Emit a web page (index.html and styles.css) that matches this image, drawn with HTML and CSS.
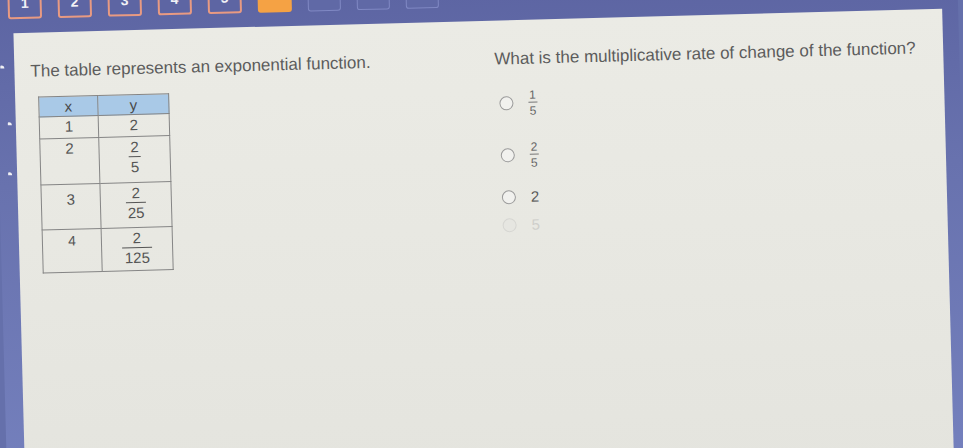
FILE: index.html
```html
<!DOCTYPE html>
<html lang="en">
<head>
<meta charset="utf-8">
<title>Exponential function question</title>
<link rel="stylesheet" href="styles.css">
</head>
<body>
<div class="screen">
  <nav class="nav">
    <span class="qbtn done">1</span>
    <span class="qbtn done">2</span>
    <span class="qbtn done">3</span>
    <span class="qbtn done">4</span>
    <span class="qbtn done">5</span>
    <span class="qbtn current">6</span>
    <span class="qbtn empty">7</span>
    <span class="qbtn empty">8</span>
    <span class="qbtn empty">9</span>
  </nav>
  <div class="main">
    <div class="rail">
      <span class="mark m1"></span>
      <span class="mark m2"></span>
      <span class="mark m3"></span>
    </div>
    <section class="card">
      <div class="cols">
        <div class="col-left">
          <p class="prompt">The table represents an exponential function.</p>
          <table class="data">
            <thead>
              <tr class="r-head"><th>x</th><th>y</th></tr>
            </thead>
            <tbody>
              <tr class="r1"><td>1</td><td>2</td></tr>
              <tr class="r2"><td>2</td><td><span class="frac"><span class="num">2</span><span class="den">5</span></span></td></tr>
              <tr class="r3"><td>3</td><td><span class="frac"><span class="num">2</span><span class="den">25</span></span></td></tr>
              <tr class="r4"><td>4</td><td><span class="frac"><span class="num">2</span><span class="den">125</span></span></td></tr>
            </tbody>
          </table>
        </div>
        <div class="col-right">
          <p class="prompt">What is the multiplicative rate of change of the function?</p>
          <ul class="options">
            <li class="opt o1"><span class="radio"></span><span class="frac small"><span class="num">1</span><span class="den">5</span></span></li>
            <li class="opt o2"><span class="radio"></span><span class="frac small"><span class="num">2</span><span class="den">5</span></span></li>
            <li class="opt o3"><span class="radio"></span><span class="val">2</span></li>
            <li class="opt o4 faded"><span class="radio"></span><span class="val">5</span></li>
          </ul>
        </div>
      </div>
    </section>
  </div>
</div>
</body>
</html>
```
FILE: styles.css
```css
html, body {
  margin: 0;
  padding: 0;
  width: 963px;
  height: 448px;
  overflow: hidden;
  background: #6570ab;
  font-family: "Liberation Sans", Arial, sans-serif;
}

.screen {
  width: 963px;
  height: 490px;
  transform-origin: 481px 224px;
  transform: rotate(-1.5deg);
  background: linear-gradient(180deg, #5c64a2 0%, #6872ae 40%, #7480bd 100%);
}

.nav {
  display: flex;
  gap: 16px;
  padding-left: 13px;
  margin-top: -23px;
  height: 30px;
}

.qbtn {
  box-sizing: border-box;
  width: 34px;
  height: 30px;
  border-radius: 3px;
  display: flex;
  align-items: flex-end;
  justify-content: center;
  padding-bottom: 6px;
  color: #f2f2f6;
  font-weight: bold;
  font-size: 14px;
}

.qbtn.done {
  border: 2px solid #e89a82;
  background: #5d65a3;
}

.qbtn.current {
  background: #f5a244;
  color: #f5a244;
}

.qbtn.empty {
  width: 33px;
  border: 1.5px solid #8089c4;
  background: #6069a6;
  color: transparent;
}

.main {
  display: flex;
  margin-top: 14px;
}

.rail {
  width: 18px;
  flex: none;
  display: flex;
  flex-direction: column;
}

.mark {
  display: block;
  width: 4px;
  height: 3px;
  background: #f0f0f4;
  border-radius: 1px 3px 0 0;
}

.m1 { margin: 32px 0 0 4px; }
.m2 { margin: 54px 0 0 10px; }
.m3 { margin: 47px 0 0 9px; }

.card {
  width: 929px;
  height: 460px;
  box-sizing: border-box;
  padding: 29px 0 0 16px;
  background: linear-gradient(180deg, #ebebe5 0%, #e7e7e1 60%, #e4e4de 100%);
}

.cols {
  display: flex;
}

.col-left {
  width: 464px;
  flex: none;
}

.col-right {
  flex: 1;
}

.prompt {
  margin: 0;
  font-size: 17px;
  line-height: 20px;
  color: #5c5c5c;
  white-space: nowrap;
}

.data {
  margin: 15px 0 0 7px;
  border-collapse: collapse;
  color: #555;
  font-size: 15px;
}

.data th,
.data td {
  border: 1px solid #858585;
  padding: 2px 0 0;
  text-align: center;
  vertical-align: top;
  line-height: 16px;
}

.data th {
  background: #a9c9e7;
  font-weight: normal;
  color: #4a4a4a;
}

.data th:first-child,
.data td:first-child { width: 58px; }

.data th:last-child,
.data td:last-child { width: 70px; }

.r-head { height: 20px; }
.r1 { height: 22px; }
.r2 { height: 46px; }
.r3 { height: 45px; }
.r4 { height: 43px; }

.r3 td:first-child { padding-top: 7px; }
.r4 td:first-child { padding-top: 3px; font-size: 14px; }

.frac {
  display: inline-flex;
  flex-direction: column;
  align-items: center;
  line-height: 1;
  vertical-align: top;
}

.frac .num {
  padding: 0 2px 2px;
}

.frac .den {
  border-top: 1.5px solid #555;
  padding: 2px 2px 0;
}

.options {
  list-style: none;
  margin: 8px 0 0;
  padding: 0;
}

.opt {
  display: flex;
  align-items: center;
  color: #5a5a5a;
}

.o1 { height: 52px; }
.o2 { height: 52px; }
.o3 { height: 32px; }
.o4 { height: 24px; }

.radio {
  box-sizing: border-box;
  width: 14px;
  height: 14px;
  border-radius: 50%;
  border: 1.5px solid #9b9b9b;
  background: #f1f1ee;
  margin: 0 15px 0 4px;
  flex: none;
}

.frac.small {
  font-size: 12px;
  color: #666;
}

.frac.small .num { padding: 0 1px 1px; }
.frac.small .den { padding: 2px 1px 0; border-top: 1px solid #777; }

.val {
  font-size: 15px;
  line-height: 18px;
}

.faded .radio {
  border-color: #d6d6d2;
  background: #e6e6e1;
}

.faded .val {
  color: #cfcfcb;
}
```
